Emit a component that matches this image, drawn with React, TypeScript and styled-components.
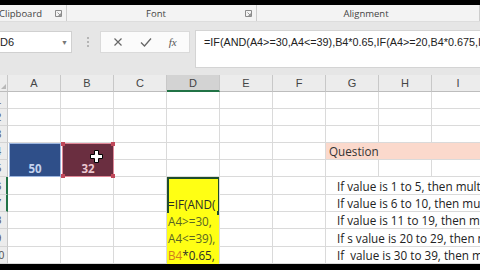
import React from 'react';
import styled, { createGlobalStyle } from 'styled-components';

const Global = createGlobalStyle`
  html, body { margin: 0; padding: 0; width: 480px; height: 270px; overflow: hidden; background: #000; }
  body { font-family: "Open Sans", "Liberation Sans", sans-serif; }
  * { box-sizing: border-box; }
`;

const Screen = styled.div`
  width: 480px;
  height: 270px;
  display: flex;
  flex-direction: column;
  background: #e6e6e6;
  overflow: hidden;
`;

const BlackBar = styled.div<{ $h: number }>`
  flex: none;
  height: ${(p) => p.$h}px;
  background: #000;
`;

const RibbonLabels = styled.div`
  flex: none;
  height: 17px;
  display: flex;
  background: #f3f3f3;
  border-bottom: 1px solid #dddddd;
  font-size: 9.5px;
  color: #444;
`;

const RibbonGroup = styled.div<{ $w?: number; $align?: string }>`
  flex: ${(p) => (p.$w ? `none` : `1`)};
  width: ${(p) => (p.$w ? `${p.$w}px` : 'auto')};
  display: flex;
  align-items: center;
  justify-content: ${(p) => p.$align || 'center'};
  border-right: 1px solid #cdcdcd;
  padding-right: 4px;
`;

const GroupLabel = styled.span<{ $grow?: boolean; $shift?: number }>`
  flex: ${(p) => (p.$grow ? 1 : 'none')};
  margin-left: ${(p) => p.$shift || 0}px;
  text-align: center;
  white-space: nowrap;
`;

const Launcher = () => (
  <svg width="7" height="7" viewBox="0 0 7 7" style={{ flex: 'none' }}>
    <path d="M0.5 0.5h6v6h-6z" fill="none" stroke="#8a8a8a" strokeWidth="1" />
    <path d="M2.5 2.5l3 3M5.5 3.5v2h-2" fill="none" stroke="#8a8a8a" strokeWidth="0.9" />
  </svg>
);

const FormulaArea = styled.div`
  flex: none;
  height: 46px;
  display: flex;
  align-items: flex-start;
  padding-top: 8px;
`;

const NameBox = styled.div`
  flex: none;
  width: 72px;
  height: 22px;
  margin-top: 1px;
  background: #fff;
  border: 1px solid #d0d0d0;
  border-left: none;
  display: flex;
  align-items: center;
  justify-content: space-between;
  padding: 0 3px 0 0;
  font-size: 11px;
  color: #222;
  font-family: "Liberation Sans", sans-serif;
`;

const Caret = styled.span`
  font-size: 7px;
  color: #777;
`;

const Dots = styled.div`
  flex: none;
  width: 28px;
  height: 22px;
  margin-top: 1px;
  display: flex;
  flex-direction: column;
  align-items: center;
  justify-content: center;
  gap: 2px;
  padding-left: 4px;
`;

const Dot = styled.span`
  width: 2px;
  height: 2px;
  background: #b5b5b5;
`;

const FuncBox = styled.div`
  flex: none;
  width: 90px;
  height: 22px;
  margin-top: 1px;
  background: #fbfbfb;
  border: 1px solid #dadada;
  display: flex;
  align-items: center;
  justify-content: space-around;
  padding: 0 4px;
  color: #666;
`;

const FxText = styled.span`
  font-family: "Liberation Serif", serif;
  font-style: italic;
  font-size: 11px;
  color: #555;
`;

const FormulaInput = styled.div`
  flex: 1;
  margin-left: 5px;
  height: 38px;
  background: #fff;
  border: 1px solid #d4d4d4;
  border-right: none;
  padding: 5px 0 0 8px;
  font-family: "Liberation Sans", sans-serif;
  font-size: 10.8px;
  color: #222;
  white-space: nowrap;
  overflow: hidden;
`;

const Gap = styled.div`
  flex: none;
  height: 7px;
`;

const Grid = styled.div`
  flex: none;
  height: 189px;
  display: grid;
  grid-template-columns: 8px repeat(9, 53px);
  grid-template-rows: 17px 17px 17px 17px 17px 17px 18px 17px 17px 18px 17px;
  background: #fff;
  overflow: hidden;
  font-family: "Open Sans", sans-serif;
  font-size: 11.7px;
  color: #333;
`;

const Corner = styled.div`
  background: #ececec;
  border-right: 1px solid #c8c8c8;
  border-bottom: 1px solid #bdbdbd;
  display: flex;
  align-items: flex-end;
  justify-content: flex-end;
  padding: 0 1px 2px 0;
`;

const ColHeader = styled.div<{ $active?: boolean }>`
  background: ${(p) => (p.$active ? '#d3d3d3' : '#ececec')};
  border-right: 1px solid #c8c8c8;
  border-bottom: ${(p) => (p.$active ? '2px solid #217346' : '1px solid #bdbdbd')};
  display: flex;
  align-items: center;
  justify-content: center;
  font-family: "Liberation Sans", sans-serif;
  font-size: 11px;
  color: #444;
`;

const RowHeader = styled.div<{ $active?: boolean; $row: number }>`
  grid-row: ${(p) => p.$row};
  grid-column: 1;
  background: #ececec;
  border-right: ${(p) => (p.$active ? '2px solid #217346' : '1px solid #c8c8c8')};
  border-bottom: 1px solid #d4d4d4;
  display: flex;
  align-items: center;
  justify-content: flex-start;
  overflow: hidden;
  font-family: "Liberation Sans", sans-serif;
  font-size: 10.5px;
  color: #555;
  white-space: nowrap;
`;

/* the header column is scrolled: only the right end of a 25px wide header shows */
const RowNum = styled.span`
  flex: none;
  width: 25px;
  margin-left: -14px;
  text-align: center;
`;

type Place = { $r: number; $c: number; $rs?: number; $cs?: number };

const Cell = styled.div<Place>`
  grid-row: ${(p) => `${p.$r} / span ${p.$rs || 1}`};
  grid-column: ${(p) => `${p.$c} / span ${p.$cs || 1}`};
  border-right: 1px solid #dadada;
  border-bottom: 1px solid #dadada;
  background: #fff;
`;

const ColorCell = styled(Cell)<{ $bg: string; $edge: string; $fg: string }>`
  position: relative;
  background: ${(p) => p.$bg};
  border: 1px solid ${(p) => p.$edge};
  margin: 0 0 0 1px;
  display: flex;
  align-items: flex-end;
  justify-content: center;
  color: ${(p) => p.$fg};
  font-weight: bold;
  font-size: 11.5px;
  line-height: 15px;
`;

const Handle = styled.span<{ $top?: boolean; $left?: boolean }>`
  position: absolute;
  width: 4px;
  height: 4px;
  background: #c0485a;
  ${(p) => (p.$top ? 'top: -2px;' : 'bottom: -2px;')}
  ${(p) => (p.$left ? 'left: -2px;' : 'right: -2px;')}
`;

const Cursor = styled.svg`
  position: absolute;
  left: 27px;
  top: 6px;
`;

const QuestionCell = styled(Cell)`
  background: #fbd9cc;
  border-right: none;
  display: flex;
  align-items: center;
  padding-left: 3px;
  color: #333;
`;

const TextCell = styled(Cell)`
  border-right: none;
  display: flex;
  align-items: flex-end;
  padding: 0 0 0 11px;
  white-space: pre;
  overflow: hidden;
  line-height: 16px;
  color: #222;
`;

const YellowCell = styled(Cell)`
  position: relative;
  background: #ffff14;
  border-bottom: none;
  display: flex;
  flex-direction: column;
  justify-content: flex-end;
  padding: 0 0 0 1px;
  line-height: 17px;
  white-space: nowrap;
  overflow: hidden;
`;

const FLine = styled.span<{ $c?: string }>`
  color: ${(p) => p.$c || '#2a2a2a'};
`;

const Ref = styled.span<{ $c: string }>`
  color: ${(p) => p.$c};
`;

const EditFrame = styled.div`
  position: absolute;
  left: 0;
  top: 0;
  width: 53px;
  height: 36px;
  border: 2px solid #1f4d2c;
  border-bottom: none;
`;

const FillHandle = styled.span`
  position: absolute;
  left: 50px;
  top: 34px;
  width: 4px;
  height: 4px;
  background: #1f4d2c;
`;

const cols = ['A', 'B', 'C', 'D', 'E', 'F', 'G', 'H', 'I'];
const rowCount = 10;

const questions = [
  'If value is 1 to 5, then multiply by 0.5',
  'If value is 6 to 10, then multiply by 0.55',
  'If value is 11 to 19, then multiply by 0.6',
  'If s value is 20 to 29, then multiply by 0.675',
  'If  value is 30 to 39, then multiply by 0.65',
];

const covered = new Set<string>();
const cover = (r: number, c: number, rs: number, cs: number) => {
  for (let i = r; i < r + rs; i++) for (let j = c; j < c + cs; j++) covered.add(`${i}-${j}`);
};
cover(4, 1, 2, 1);
cover(4, 2, 2, 1);
cover(4, 7, 1, 3);
cover(6, 4, 5, 1);
for (let r = 6; r <= 10; r++) cover(r, 7, 1, 3);

export default function App() {
  const plain: React.ReactNode[] = [];
  for (let r = 1; r <= rowCount; r++) {
    for (let c = 1; c <= 9; c++) {
      if (!covered.has(`${r}-${c}`)) plain.push(<Cell key={`${r}-${c}`} $r={r + 1} $c={c + 1} />);
    }
  }

  return (
    <Screen>
      <Global />
      <BlackBar $h={5} />
      <RibbonLabels>
        <RibbonGroup $w={67} $align="space-between">
          <GroupLabel $shift={-1}>Clipboard</GroupLabel>
          <Launcher />
        </RibbonGroup>
        <RibbonGroup $w={190}>
          <GroupLabel $grow>Font</GroupLabel>
          <Launcher />
        </RibbonGroup>
        <RibbonGroup>
          <GroupLabel $grow>Alignment</GroupLabel>
        </RibbonGroup>
      </RibbonLabels>
      <FormulaArea>
        <NameBox>
          <span>D6</span>
          <Caret>▼</Caret>
        </NameBox>
        <Dots>
          <Dot />
          <Dot />
          <Dot />
        </Dots>
        <FuncBox>
          <svg width="10" height="10" viewBox="0 0 10 10">
            <path d="M1.5 1.5l7 7M8.5 1.5l-7 7" stroke="#666" strokeWidth="1.2" />
          </svg>
          <svg width="12" height="10" viewBox="0 0 12 10">
            <path d="M1 5.5l3.5 3.5L11 1.5" stroke="#666" strokeWidth="1.3" fill="none" />
          </svg>
          <FxText>fx</FxText>
        </FuncBox>
        <FormulaInput>=IF(AND(A4&gt;=30,A4&lt;=39),B4*0.65,IF(A4&gt;=20,B4*0.675,IF(A4&gt;=11,B4*0.6,B4*0.5)))</FormulaInput>
      </FormulaArea>
      <Gap />
      <Grid>
        <Corner>
          <svg width="5" height="5" viewBox="0 0 5 5">
            <path d="M5 0v5H0z" fill="#b8b8b8" />
          </svg>
        </Corner>
        {cols.map((c) => (
          <ColHeader key={c} $active={c === 'D'}>
            {c}
          </ColHeader>
        ))}
        {Array.from({ length: rowCount }, (_, i) => (
          <RowHeader key={i} $row={i + 2} $active={i === 5 || i === 6}>
            <RowNum>{i + 1}</RowNum>
          </RowHeader>
        ))}
        {plain}
        <ColorCell $r={5} $c={2} $rs={2} $bg="#2f4f89" $edge="#9db6df" $fg="#c3d2ee">
          50
        </ColorCell>
        <ColorCell $r={5} $c={3} $rs={2} $bg="#6a2e40" $edge="#e08898" $fg="#ecc8d0">
          32
          <Handle $top $left />
          <Handle $top />
          <Handle $left />
          <Handle />
          <Cursor width="13" height="13" viewBox="0 0 13 13">
            <path d="M4.5 0.5h4v4h4v4h-4v4h-4v-4h-4v-4h4z" fill="#fff" stroke="#000" strokeWidth="1" />
          </Cursor>
        </ColorCell>
        <QuestionCell $r={5} $c={8} $cs={3}>
          Question
        </QuestionCell>
        <YellowCell $r={7} $c={5} $rs={5}>
          <FLine>=IF(AND(</FLine>
          <FLine $c="#5a6624">A4&gt;=30,</FLine>
          <FLine $c="#5a6624">A4&lt;=39),</FLine>
          <FLine>
            <Ref $c="#d27d1e">B4</Ref>*0.65,
          </FLine>
          <EditFrame />
          <FillHandle />
        </YellowCell>
        {questions.map((q, i) => (
          <TextCell key={i} $r={i + 7} $c={8} $cs={3}>
            {q}
          </TextCell>
        ))}
      </Grid>
      <BlackBar $h={6} />
    </Screen>
  );
}
